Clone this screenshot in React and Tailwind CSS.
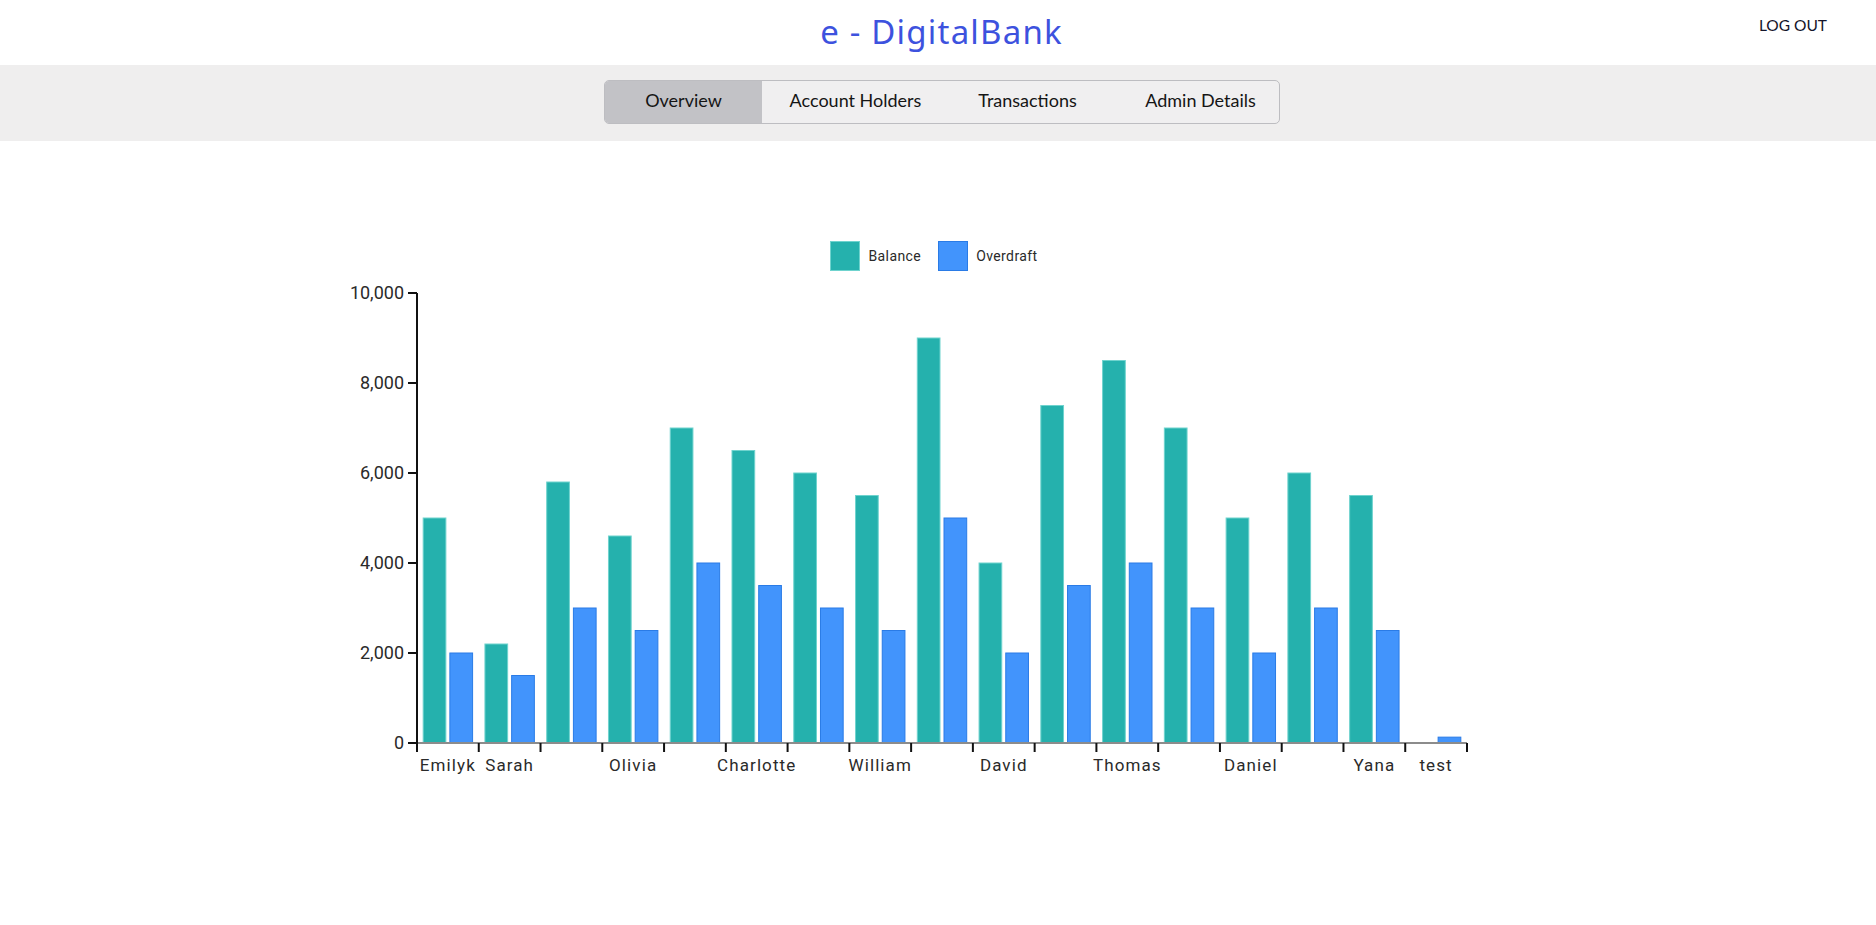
import React from "react";

const data = [
  { name: "Emilyk", balance: 5000, overdraft: 2000 },
  { name: "Sarah", balance: 2200, overdraft: 1500 },
  { name: "James", balance: 5800, overdraft: 3000 },
  { name: "Olivia", balance: 4600, overdraft: 2500 },
  { name: "Liam", balance: 7000, overdraft: 4000 },
  { name: "Charlotte", balance: 6500, overdraft: 3500 },
  { name: "Noah", balance: 6000, overdraft: 3000 },
  { name: "William", balance: 5500, overdraft: 2500 },
  { name: "Sophia", balance: 9000, overdraft: 5000 },
  { name: "David", balance: 4000, overdraft: 2000 },
  { name: "Emma", balance: 7500, overdraft: 3500 },
  { name: "Thomas", balance: 8500, overdraft: 4000 },
  { name: "Mia", balance: 7000, overdraft: 3000 },
  { name: "Daniel", balance: 5000, overdraft: 2000 },
  { name: "Lucas", balance: 6000, overdraft: 3000 },
  { name: "Yana", balance: 5500, overdraft: 2500 },
  { name: "test", balance: 0, overdraft: 130 },
];

// labels recharts left visible
const shown = new Set([0, 1, 3, 5, 7, 9, 11, 13, 15, 16]);

const tabs = [
  { label: "Overview", w: "w-[157px]", active: true },
  { label: "Account Holders", w: "w-[187px]" },
  { label: "Transactions", w: "w-[157px]" },
  { label: "Admin Details", w: "w-[173px] pl-[16px]" },
];

const X0 = 87;
const Y0 = 463;
const BAND = 1050 / 17;
const K = 0.045;

function Chart() {
  const yTicks = [0, 2000, 4000, 6000, 8000, 10000];
  return (
    <svg width="1208" height="520" style={{ fontFamily: "Roboto, sans-serif" }}>
      {data.map((d, i) => {
        const bx = X0 + i * BAND + BAND * 0.1;
        const bw = (BAND * 0.8 - 4) / 2;
        const hb = d.balance * K;
        const ho = d.overdraft * K;
        return (
          <g key={d.name}>
            {hb > 0 && (
              <rect x={bx} y={Y0 - hb} width={bw} height={hb} fill="#25b1ad" stroke="#6fd3ce" strokeWidth="1" />
            )}
            <rect x={bx + bw + 4} y={Y0 - ho} width={bw} height={ho} fill="#4294fc" stroke="#2a7be6" strokeWidth="1" />
          </g>
        );
      })}
      <line x1={X0} y1={Y0} x2={X0 + 1050} y2={Y0} stroke="#8c8c8c" strokeWidth="2" />
      <line x1={X0} y1={Y0 - 450} x2={X0} y2={Y0 + 1} stroke="#111" strokeWidth="2" />
      {yTicks.map((t) => (
        <g key={t}>
          <line x1={X0 - 9} y1={Y0 - t * K} x2={X0} y2={Y0 - t * K} stroke="#111" strokeWidth="2" />
          <text x={X0 - 13} y={Y0 - t * K + 6} textAnchor="end" fontSize="18" fill="#2a2a2a">
            {t.toLocaleString("en-US")}
          </text>
        </g>
      ))}
      {Array.from({ length: 18 }).map((_, k) => (
        <line key={k} x1={X0 + k * BAND} y1={Y0} x2={X0 + k * BAND} y2={Y0 + 9} stroke="#111" strokeWidth="2" />
      ))}
      {data.map((d, i) =>
        shown.has(i) ? (
          <text
            key={d.name}
            x={X0 + (i + 0.5) * BAND}
            y={Y0 + 28}
            textAnchor="middle"
            fontSize="17"
            letterSpacing="1.1"
            fill="#2a2a2a"
          >
            {d.name}
          </text>
        ) : null
      )}
    </svg>
  );
}

export default function App() {
  return (
    <div className="min-h-screen bg-white" style={{ fontFamily: "Lato, sans-serif" }}>
      <header className="h-[65px] flex items-center justify-center relative">
        <h1
          className="text-[33px] text-[#3d52de] leading-none tracking-[1.2px] mb-[2px] ml-[7px]"
          style={{ fontFamily: "'Noto Sans', sans-serif" }}
        >
          e - DigitalBank
        </h1>
        <button className="absolute right-[49px] top-[14px] text-[15.5px] text-[#14142a]">LOG OUT</button>
      </header>
      <nav className="h-[76px] bg-[#efeeee] flex items-center justify-center">
        <div className="flex h-[44px] ml-[8px] -mt-[2px] rounded-[5px] border border-[#bdbdc1] bg-[#f0eff0] overflow-hidden">
          {tabs.map((t) => (
            <div
              key={t.label}
              className={`${t.w} flex items-center justify-center pb-[3px] text-[18px] text-[#151515] ${
                t.active ? "bg-[#c2c2c6]" : ""
              }`}
            >
              {t.label}
            </div>
          ))}
        </div>
      </nav>
      <main className="pt-[100px]">
        <div className="ml-[330px] w-[1208px]">
          <div className="flex justify-center gap-[8px] h-[30px] items-center" style={{ fontFamily: "Roboto, sans-serif" }}>
            <div className="flex items-center gap-[8px] mr-[9px]">
              <span className="w-[30px] h-[30px] bg-[#25b1ad] border border-[#6fd3ce]" />
              <span className="text-[14px] text-[#2a2a2a] tracking-[0.4px]">Balance</span>
            </div>
            <div className="flex items-center gap-[8px]">
              <span className="w-[30px] h-[30px] bg-[#4294fc] border border-[#2a7be6]" />
              <span className="text-[14px] text-[#2a2a2a] tracking-[0.4px]">Overdraft</span>
            </div>
          </div>
          <div className="mt-[9px]">
            <Chart />
          </div>
        </div>
      </main>
    </div>
  );
}
